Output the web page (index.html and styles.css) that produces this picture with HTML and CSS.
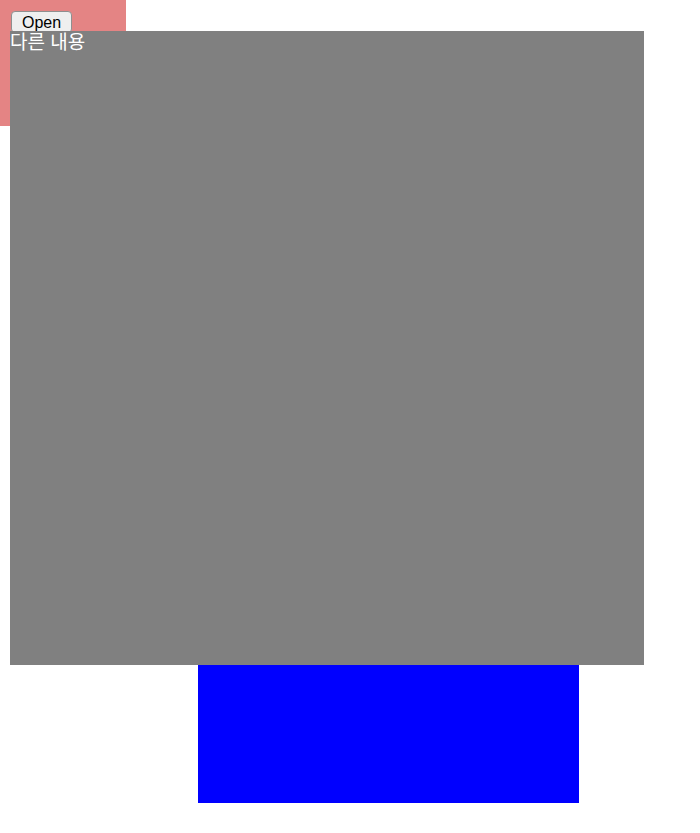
FILE: index.html
```html
<!DOCTYPE html>
<html lang="ko">
<head>
<meta charset="utf-8">
<link rel="stylesheet" href="styles.css">
</head>
<body>
<div class="backdrop"></div>
<div class="page">
  <button class="open-btn" type="button">Open</button>
  <div class="panel">다른 내용</div>
  <div class="footer-box"></div>
</div>
</body>
</html>
```
FILE: styles.css
```css
html, body {
  margin: 0;
  padding: 0;
  background: #ffffff;
}
.backdrop {
  position: absolute;
  left: 0;
  top: 0;
  width: 126px;
  height: 126px;
  background: #e48484;
}
.page {
  position: relative;
  padding: 11px 0 0 10px;
  font-family: "Liberation Sans", Arial, sans-serif;
}
.open-btn {
  display: inline-block;
  box-sizing: border-box;
  height: 22px;
  margin: 0 0 0 1px;
  padding: 0 10px;
  font-family: "Liberation Sans", Arial, sans-serif;
  font-size: 16px;
  line-height: 19px;
  color: #000;
  background: #efefef;
  border: 1px solid #8f8f8f;
  border-radius: 4px;
  vertical-align: top;
}
.panel {
  position: relative;
  width: 634px;
  height: 634px;
  margin-top: -2px;
  background: #808080;
  color: #ffffff;
  font-family: "Noto Sans CJK KR", "Liberation Sans", sans-serif;
  font-size: 19px;
  line-height: 20px;
}
.footer-box {
  width: 381px;
  height: 138px;
  margin-left: 188px;
  background: #0000ff;
}
```
